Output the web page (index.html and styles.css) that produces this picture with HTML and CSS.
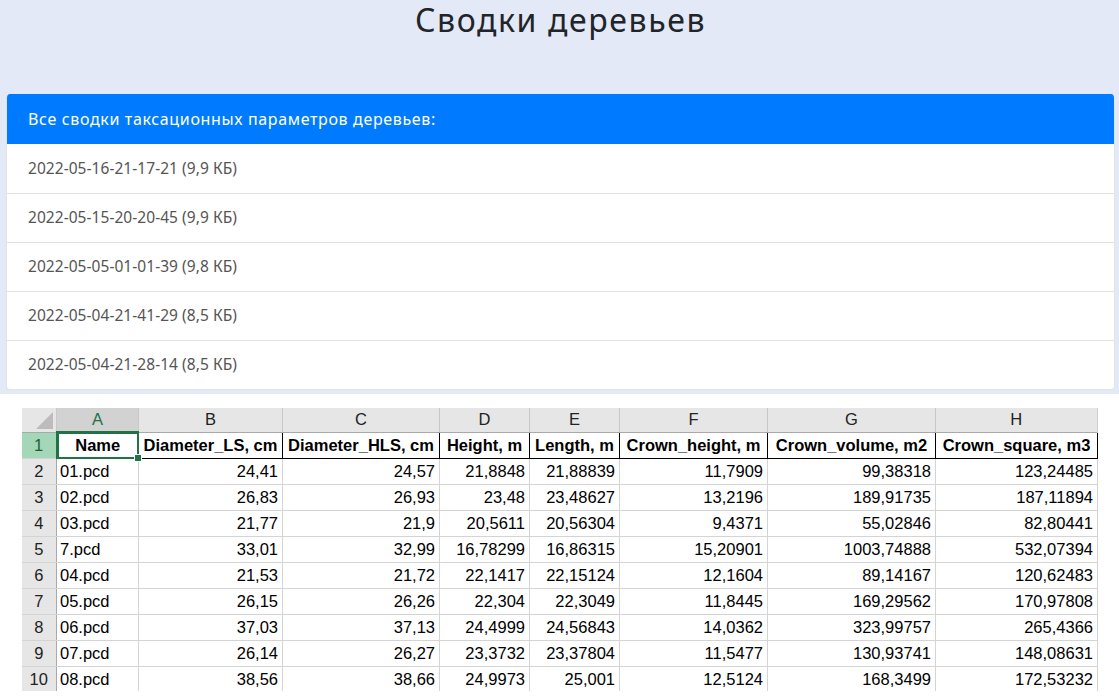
FILE: index.html
```html
<!DOCTYPE html>
<html lang="ru">
<head>
<meta charset="utf-8">
<title>Сводки деревьев</title>
<link rel="stylesheet" href="styles.css">
</head>
<body>
<section class="top">
  <h1 class="title">Сводки деревьев</h1>
  <div class="card">
    <div class="card-head">Все сводки таксационных параметров деревьев:</div>
    <ul class="files">
      <li class="file">2022-05-16-21-17-21 (9,9 КБ)</li>
      <li class="file">2022-05-15-20-20-45 (9,9 КБ)</li>
      <li class="file">2022-05-05-01-01-39 (9,8 КБ)</li>
      <li class="file">2022-05-04-21-41-29 (8,5 КБ)</li>
      <li class="file">2022-05-04-21-28-14 (8,5 КБ)</li>
    </ul>
  </div>
</section>
<div class="sheet-wrap">
  <table class="sheet">
    <colgroup>
      <col class="c-num"><col class="c-a"><col class="c-b"><col class="c-c"><col class="c-d"><col class="c-e"><col class="c-f"><col class="c-g"><col class="c-h">
    </colgroup>
    <thead>
      <tr class="letters">
        <th class="corner"><span class="tri"></span></th>
        <th class="sel-col">A</th><th>B</th><th>C</th><th>D</th><th>E</th><th>F</th><th>G</th><th class="last">H</th>
      </tr>
    </thead>
    <tbody>
      <tr class="hdr">
        <th class="rn sel-row">1</th>
        <td class="active">Name<span class="handle"></span></td><td>Diameter_LS, cm</td><td>Diameter_HLS, cm</td><td>Height, m</td><td>Length, m</td><td>Crown_height, m</td><td>Crown_volume, m2</td><td>Crown_square, m3</td>
      </tr>
      <tr><th class="rn">2</th><td class="nm">01.pcd</td><td>24,41</td><td>24,57</td><td>21,8848</td><td>21,88839</td><td>11,7909</td><td>99,38318</td><td>123,24485</td></tr>
      <tr><th class="rn">3</th><td class="nm">02.pcd</td><td>26,83</td><td>26,93</td><td>23,48</td><td>23,48627</td><td>13,2196</td><td>189,91735</td><td>187,11894</td></tr>
      <tr><th class="rn">4</th><td class="nm">03.pcd</td><td>21,77</td><td>21,9</td><td>20,5611</td><td>20,56304</td><td>9,4371</td><td>55,02846</td><td>82,80441</td></tr>
      <tr><th class="rn">5</th><td class="nm">7.pcd</td><td>33,01</td><td>32,99</td><td>16,78299</td><td>16,86315</td><td>15,20901</td><td>1003,74888</td><td>532,07394</td></tr>
      <tr><th class="rn">6</th><td class="nm">04.pcd</td><td>21,53</td><td>21,72</td><td>22,1417</td><td>22,15124</td><td>12,1604</td><td>89,14167</td><td>120,62483</td></tr>
      <tr><th class="rn">7</th><td class="nm">05.pcd</td><td>26,15</td><td>26,26</td><td>22,304</td><td>22,3049</td><td>11,8445</td><td>169,29562</td><td>170,97808</td></tr>
      <tr><th class="rn">8</th><td class="nm">06.pcd</td><td>37,03</td><td>37,13</td><td>24,4999</td><td>24,56843</td><td>14,0362</td><td>323,99757</td><td>265,4366</td></tr>
      <tr><th class="rn">9</th><td class="nm">07.pcd</td><td>26,14</td><td>26,27</td><td>23,3732</td><td>23,37804</td><td>11,5477</td><td>130,93741</td><td>148,08631</td></tr>
      <tr><th class="rn">10</th><td class="nm">08.pcd</td><td>38,56</td><td>38,66</td><td>24,9973</td><td>25,001</td><td>12,5124</td><td>168,3499</td><td>172,53232</td></tr>
    </tbody>
  </table>
</div>
</body>
</html>
```
FILE: styles.css
```css
html, body {
  margin: 0;
  padding: 0;
  background: #ffffff;
}
body {
  font-family: "Noto Sans", "DejaVu Sans", sans-serif;
}
.top {
  background: #e3e9f6;
  padding: 0 4px 4px 6px;
}
.title {
  margin: 0;
  height: 94px;
  box-sizing: border-box;
  text-align: center;
  font-size: 32px;
  font-weight: 400;
  letter-spacing: 1.6px;
  line-height: 40px;
  color: #212529;
}
.card {
  background: #fff;
  border-radius: 4px;
  overflow: hidden;
  border: 1px solid #dfe3ea;
  border-top: 0;
}
.card-head {
  background: #007bff;
  color: #fff;
  height: 50px;
  padding: 0 21px 1px;
  box-sizing: border-box;
  display: flex;
  align-items: center;
  font-size: 16px;
  letter-spacing: 0.65px;
}
.files {
  list-style: none;
  margin: 0;
  padding: 0;
}
.file {
  height: 49px;
  box-sizing: border-box;
  display: flex;
  align-items: center;
  padding: 0 21px 2px;
  color: #555;
  font-size: 15.5px;
  letter-spacing: 0.05px;
  border-top: 1px solid #e2e2e2;
}
.file:first-child {
  border-top: 0;
}
.sheet-wrap {
  width: 1076px;
  height: 283px;
  margin: 14px auto 0;
  overflow: hidden;
}
.sheet {
  table-layout: fixed;
  border-collapse: collapse;
  width: 1076px;
  font-family: "Liberation Sans", Arial, sans-serif;
  font-size: 16.5px;
  color: #000;
}
.c-num { width: 35px; }
.c-a { width: 82px; }
.c-b { width: 144px; }
.c-c { width: 157px; }
.c-d { width: 90px; }
.c-e { width: 90px; }
.c-f { width: 148px; }
.c-g { width: 168px; }
.c-h { width: 162px; }
.sheet th, .sheet td {
  padding: 0 4px;
  white-space: nowrap;
  overflow: hidden;
}
.letters th {
  height: 23px;
  background: #e6e6e6;
  font-weight: 400;
  color: #222;
  text-align: center;
  border-right: 1px solid #c8c8c8;
  border-bottom: 1px solid #a9a9a9;
}
.letters th.last {
  border-right: 2px solid #cfcfcf;
}
.letters th.sel-col {
  background: #d2d2d2;
  color: #217346;
  border-bottom: 2px solid #217346;
}
.corner {
  position: relative;
}
.tri {
  position: absolute;
  right: 3px;
  bottom: 3px;
  width: 0;
  height: 0;
  border-left: 17px solid transparent;
  border-bottom: 17px solid #bcbcbc;
}
tbody tr {
  height: 26px;
}
.rn {
  background: #e6e6e6;
  font-weight: 400;
  color: #222;
  text-align: center;
  padding: 0 !important;
  border-right: 1px solid #a9a9a9;
  border-bottom: 1px solid #d4d4d4;
}
.rn.sel-row {
  background: #a4d6b8;
  color: #1d5e39;
  border-right: 2px solid #217346;
}
tbody td {
  text-align: right;
  border: 1px solid #d4d4d4;
  border-left: 0;
  border-top: 0;
}
tbody td.nm {
  text-align: left;
  padding-left: 3px;
}
.hdr td {
  font-weight: 700;
  text-align: center;
  border: 1px solid #000;
  padding: 0 2px;
}
.hdr td.active {
  position: relative;
  overflow: visible;
}
.active::after {
  content: "";
  position: absolute;
  left: -1px;
  top: -1px;
  right: -1px;
  bottom: -1px;
  border: 2px solid #217346;
}
.handle {
  position: absolute;
  right: -4px;
  bottom: -4px;
  width: 6px;
  height: 6px;
  background: #217346;
  border: 1px solid #fff;
  z-index: 2;
}
```
